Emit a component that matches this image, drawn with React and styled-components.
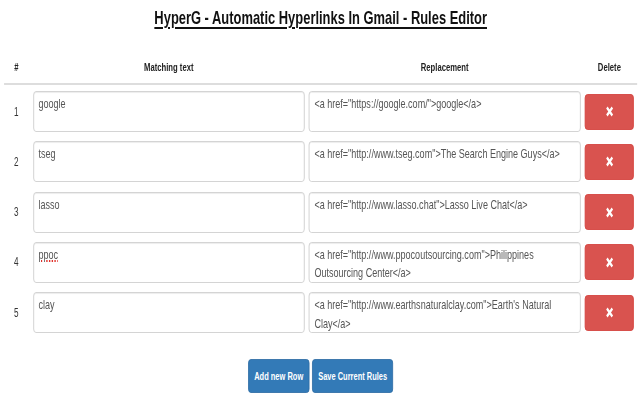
import React from 'react';
import styled, { createGlobalStyle } from 'styled-components';

// the reference is a horizontally squeezed bootstrap page, so we lay it out
// at full width and squeeze the whole sheet once
const SQUEEZE = 0.68;

const rules = [
  { id: 1, match: 'google', replace: '<a href="https://google.com/">google</a>' },
  { id: 2, match: 'tseg', replace: '<a href="http://www.tseg.com">The Search Engine Guys</a>' },
  { id: 3, match: 'lasso', replace: '<a href="http://www.lasso.chat">Lasso Live Chat</a>' },
  { id: 4, match: 'ppoc', replace: '<a href="http://www.ppocoutsourcing.com">Philippines Outsourcing Center</a>', typo: true },
  { id: 5, match: 'clay', replace: '<a href="http://www.earthsnaturalclay.com">Earth\'s Natural Clay</a>' },
];

const GlobalStyle = createGlobalStyle`
  html, body {
    margin: 0;
    padding: 0;
    background: #fff;
    overflow: hidden;
  }
  body {
    font-family: "Liberation Sans", Arial, Helvetica, sans-serif;
    color: #333;
  }
`;

const Page = styled.div`
  box-sizing: border-box;
  width: ${640 / SQUEEZE}px;
  height: 400px;
  padding: 7px 4px 0 6px;
  transform: scaleX(${SQUEEZE});
  transform-origin: 0 0;
`;

const Title = styled.h1`
  margin: 0;
  text-align: center;
  font-size: 19px;
  line-height: 22px;
  font-weight: bold;
  color: #111;
  text-decoration: underline;
  text-decoration-thickness: 2px;
  text-underline-offset: 3px;
`;

const Columns = styled.div`
  display: grid;
  grid-template-columns: 36px 1fr 1fr 72px;
  column-gap: 6.5px;
  padding-right: 5px;
`;

const HeadRow = styled(Columns)`
  margin-top: 22px;
  padding-top: 8px;
  padding-bottom: 8px;
  border-bottom: 2px solid #ddd;
`;

const HeadCell = styled.div`
  text-align: center;
  font-size: 11.3px;
  line-height: 16px;
  font-weight: bold;
  color: #222;
`;

const Body = styled.div`
  display: flex;
  flex-direction: column;
  gap: 9.25px;
  padding-top: 6px;
`;

const Row = styled(Columns)`
  align-items: center;
  height: 41px;
`;

const Num = styled.div`
  text-align: center;
  font-size: 12px;
  color: #333;
`;

const Field = styled.div`
  box-sizing: border-box;
  height: 41px;
  padding: 3px 7px;
  border: 1px solid #ccc;
  border-radius: 4px;
  box-shadow: inset 0 1px 1px rgba(0, 0, 0, 0.075);
  background: #fff;
  font-size: 13.3px;
  line-height: 18.7px;
  color: #555;
  overflow: hidden;
  overflow-wrap: break-word;
`;

const Typo = styled.span`
  text-decoration: underline dotted #e0312b;
  text-decoration-thickness: 2px;
  text-underline-offset: 2px;
`;

const DeleteButton = styled.button`
  display: flex;
  align-items: center;
  justify-content: center;
  height: 36px;
  padding: 0;
  border: 1px solid #d43f3a;
  border-radius: 4px;
  background: #d9534f;
  cursor: pointer;
`;

const Footer = styled.div`
  display: flex;
  justify-content: center;
  gap: 4px;
  margin-top: 26px;
`;

const ActionButton = styled.button`
  height: 34px;
  padding: 0 8px;
  border: 1px solid #2e6da4;
  border-radius: 4px;
  background: #337ab7;
  color: #fff;
  font-family: inherit;
  font-size: 11px;
  font-weight: bold;
  cursor: pointer;
`;

const RemoveIcon = () => (
  <svg width="11" height="11" viewBox="0 0 11 11">
    <path d="M1.5 1.5 L9.5 9.5 M9.5 1.5 L1.5 9.5" stroke="#fff" strokeWidth="3" />
  </svg>
);

const App = () => {
  return (
    <>
      <GlobalStyle />
      <Page>
        <Title>HyperG - Automatic Hyperlinks In Gmail - Rules Editor</Title>
        <HeadRow>
          <HeadCell>#</HeadCell>
          <HeadCell>Matching text</HeadCell>
          <HeadCell>Replacement</HeadCell>
          <HeadCell>Delete</HeadCell>
        </HeadRow>
        <Body>
          {rules.map((rule) => (
            <Row key={rule.id}>
              <Num>{rule.id}</Num>
              <Field>{rule.typo ? <Typo>{rule.match}</Typo> : rule.match}</Field>
              <Field>{rule.replace}</Field>
              <DeleteButton aria-label="Delete">
                <RemoveIcon />
              </DeleteButton>
            </Row>
          ))}
        </Body>
        <Footer>
          <ActionButton>Add new Row</ActionButton>
          <ActionButton>Save Current Rules</ActionButton>
        </Footer>
      </Page>
    </>
  );
};

export default App;
